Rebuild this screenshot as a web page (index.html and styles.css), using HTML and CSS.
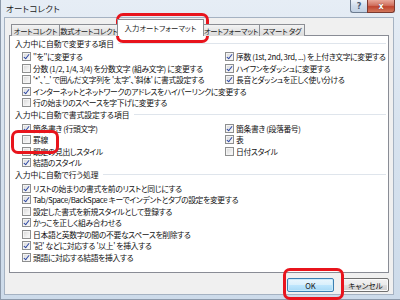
FILE: index.html
```html
<!DOCTYPE html>
<html lang="ja">
<head>
<meta charset="utf-8">
<title>オートコレクト</title>
<link rel="stylesheet" href="styles.css">
</head>
<body>
<div class="window">
  <div class="titlebar">
    <span class="title">オートコレクト</span>
    <div class="caption">
      <span class="cap-btn help">?</span>
      <span class="cap-btn close">x</span>
    </div>
  </div>
  <div class="client">
    <div class="tabs">
      <span class="tab t1">オートコレクト</span>
      <span class="tab t2">数式オートコレクト</span>
      <span class="tab t3 selected">入力オートフォーマット</span>
      <span class="tab t4">オートフォーマット</span>
      <span class="tab t5">スマート タグ</span>
    </div>
    <div class="panel">
      <section class="group">
        <div class="group-head"><span>入力中に自動で変更する項目</span></div>
        <div class="row">
          <span class="item"><i class="cb on"></i>''を''に変更する</span>
          <span class="item right"><i class="cb on"></i>序数 (1st, 2nd, 3rd, ...) を上付き文字に変更する</span>
        </div>
        <div class="row">
          <span class="item"><i class="cb"></i>分数 (1/2, 1/4, 3/4) を分数文字 (組み文字) に変更する</span>
          <span class="item right"><i class="cb on"></i>ハイフンをダッシュに変更する</span>
        </div>
        <div class="row">
          <span class="item"><i class="cb"></i>'*'、'_' で囲んだ文字列を '太字'、'斜体' に書式設定する</span>
          <span class="item right"><i class="cb on"></i>長音とダッシュを正しく使い分ける</span>
        </div>
        <div class="row">
          <span class="item"><i class="cb on"></i>インターネットとネットワークのアドレスをハイパーリンクに変更する</span>
        </div>
        <div class="row">
          <span class="item"><i class="cb"></i>行の始まりのスペースを字下げに変更する</span>
        </div>
      </section>
      <section class="group">
        <div class="group-head"><span>入力中に自動で書式設定する項目</span></div>
        <div class="row">
          <span class="item"><i class="cb on"></i>箇条書き (行頭文字)</span>
          <span class="item right"><i class="cb on"></i>箇条書き (段落番号)</span>
        </div>
        <div class="row">
          <span class="item"><i class="cb"></i>罫線</span>
          <span class="item right"><i class="cb on"></i>表</span>
        </div>
        <div class="row">
          <span class="item"><i class="cb"></i>既定の見出しスタイル</span>
          <span class="item right"><i class="cb"></i>日付スタイル</span>
        </div>
        <div class="row">
          <span class="item"><i class="cb on"></i>結語のスタイル</span>
        </div>
      </section>
      <section class="group">
        <div class="group-head"><span>入力中に自動で行う処理</span></div>
        <div class="row"><span class="item"><i class="cb on"></i>リストの始まりの書式を前のリストと同じにする</span></div>
        <div class="row"><span class="item"><i class="cb on"></i>Tab/Space/BackSpace キーでインデントとタブの設定を変更する</span></div>
        <div class="row"><span class="item"><i class="cb"></i>設定した書式を新規スタイルとして登録する</span></div>
        <div class="row"><span class="item"><i class="cb on"></i>かっこを正しく組み合わせる</span></div>
        <div class="row"><span class="item"><i class="cb"></i>日本語と英数字の間の不要なスペースを削除する</span></div>
        <div class="row"><span class="item"><i class="cb on"></i>'記' などに対応する '以上' を挿入する</span></div>
        <div class="row"><span class="item"><i class="cb on"></i>頭語に対応する結語を挿入する</span></div>
      </section>
    </div>
    <div class="buttons">
      <span class="btn default">OK</span>
      <span class="btn">キャンセル</span>
    </div>
  </div>
  <div class="mark mark-tab"></div>
  <div class="mark mark-line"></div>
  <div class="mark mark-ok"></div>
</div>
</body>
</html>
```

FILE: styles.css
```css
* { box-sizing: border-box; }
html, body { margin: 0; padding: 0; }
body {
  width: 400px;
  height: 300px;
  overflow: hidden;
  font-family: "Noto Sans CJK JP", "Noto Sans", sans-serif;
  font-feature-settings: "palt";
  color: #111;
  background: #cfdbe8;
}
.window {
  position: relative;
  width: 400px;
  height: 300px;
  display: flex;
  flex-direction: column;
  background: linear-gradient(to bottom, #e6edf5 0%, #d8e3ef 40%, #cddbea 100%);
  border-left: 1px solid #8d9aab;
  border-bottom: 1px solid #8d9aab;
  padding: 0 6px 4px 3px;
}
.titlebar {
  height: 17px;
  display: flex;
  align-items: center;
  justify-content: space-between;
  padding-left: 2px;
}
.title {
  font-size: 8.5px;
  color: #1b1b1b;
  letter-spacing: 0.2px;
  margin-top: -2px;
}
.caption {
  display: flex;
  align-self: flex-start;
  margin-right: -1px;
}
.cap-btn {
  height: 13px;
  display: flex;
  align-items: center;
  justify-content: center;
  font-family: "DejaVu Sans", sans-serif;
  font-size: 8px;
  font-weight: bold;
  border: 1px solid #6d7c90;
  border-top: none;
}
.help {
  width: 17px;
  background: linear-gradient(to bottom, #eef3f9, #cfdceb 50%, #c2d1e3);
  color: #4b5a70;
  border-radius: 0 0 0 3px;
  border-right: none;
}
.close {
  width: 28px;
  background: linear-gradient(to bottom, #e9a99b, #d0705e 45%, #c0452f 55%, #d2785c);
  color: #fff;
  border-color: #7b3a30;
  border-radius: 0 0 3px 0;
  text-shadow: 0 0 1px #4a1a14;
}
.client {
  flex: 1;
  background: #f0f0f0;
  border: 1px solid #a5b2c2;
  display: flex;
  flex-direction: column;
  padding: 0 4px 0 4px;
}
.tabs {
  display: flex;
  align-items: flex-end;
  height: 18px;
  padding-left: 2px;
  position: relative;
  z-index: 1;
  margin-bottom: -1px;
}
.tab {
  height: 12px;
  font-size: 7.4px;
  letter-spacing: -0.3px;
  line-height: 11px;
  text-align: center;
  white-space: nowrap;
  background: linear-gradient(to bottom, #f3f3f3, #e6e6e6 50%, #dbdbdb);
  border: 1px solid #8c8e94;
  border-bottom: none;
  margin-right: -1px;
  color: #1a1a1a;
}
.t1 { width: 49px; }
.t2 { width: 60px; }
.t3 { width: 87px; }
.t4 { width: 58px; }
.t5 { width: 46px; }
.tab.selected {
  height: 17px;
  line-height: 15px;
  letter-spacing: 0;
  background: #fff;
  border-color: #8c8e94;
  margin-left: -1px;
  margin-right: -2px;
  position: relative;
  z-index: 2;
}
.panel {
  height: 238px;
  background: #fff;
  border: 1px solid #898c95;
  padding: 1px 2px 0 5px;
}
.group-head {
  height: 12px;
  display: flex;
  align-items: center;
  gap: 4px;
  font-size: 7.8px;
  white-space: nowrap;
  margin-bottom: 2px;
}
.group-head::after {
  content: "";
  flex: 1;
  height: 1px;
  background: #dfe5ec;
}
.row {
  height: 11.5px;
  display: flex;
  align-items: center;
  padding-left: 7px;
  font-size: 7.8px;
  letter-spacing: -0.35px;
  white-space: nowrap;
}
.item {
  display: flex;
  align-items: center;
  gap: 2px;
  width: 203px;
  flex: none;
}
.item.right { width: auto; }
.cb {
  position: relative;
  width: 9px;
  height: 9px;
  flex: none;
  border: 1px solid #8e8f8f;
  background: linear-gradient(135deg, #d6d6d6, #f2f2f2 70%, #fbfbfb);
  box-shadow: inset 0 0 0 1px #f4f4f4;
}
.cb.on::after {
  content: "";
  position: absolute;
  left: 2px;
  top: 0px;
  width: 2px;
  height: 5px;
  border-right: 1.6px solid #2b46a3;
  border-bottom: 1.6px solid #2b46a3;
  transform: rotate(38deg);
}
.buttons {
  display: flex;
  justify-content: flex-end;
  gap: 8px;
  padding-top: 5px;
  padding-right: 0;
}
.btn {
  width: 47px;
  height: 14px;
  display: flex;
  align-items: center;
  justify-content: center;
  font-size: 7.6px;
  border: 1px solid #707070;
  border-radius: 2px;
  background: linear-gradient(to bottom, #f2f2f2 0%, #ebebeb 48%, #dddddd 52%, #cfcfcf 100%);
  box-shadow: inset 0 0 0 1px #fbfbfb;
}
.btn.default {
  border-color: #3c7fb1;
  background: linear-gradient(to bottom, #eaf6fd 0%, #d9f0fc 48%, #bee6fd 52%, #a7d9f5 100%);
  box-shadow: inset 0 0 0 1px #c9eaf9;
}
.mark {
  position: absolute;
  border: 3px solid #e8141c;
  border-radius: 7px;
}
.mark-tab { left: 115px; top: 13px; width: 93px; height: 30px; }
.mark-line { left: 10px; top: 130px; width: 48px; height: 24px; }
.mark-ok { left: 282px; top: 268px; width: 61px; height: 32px; }
```
